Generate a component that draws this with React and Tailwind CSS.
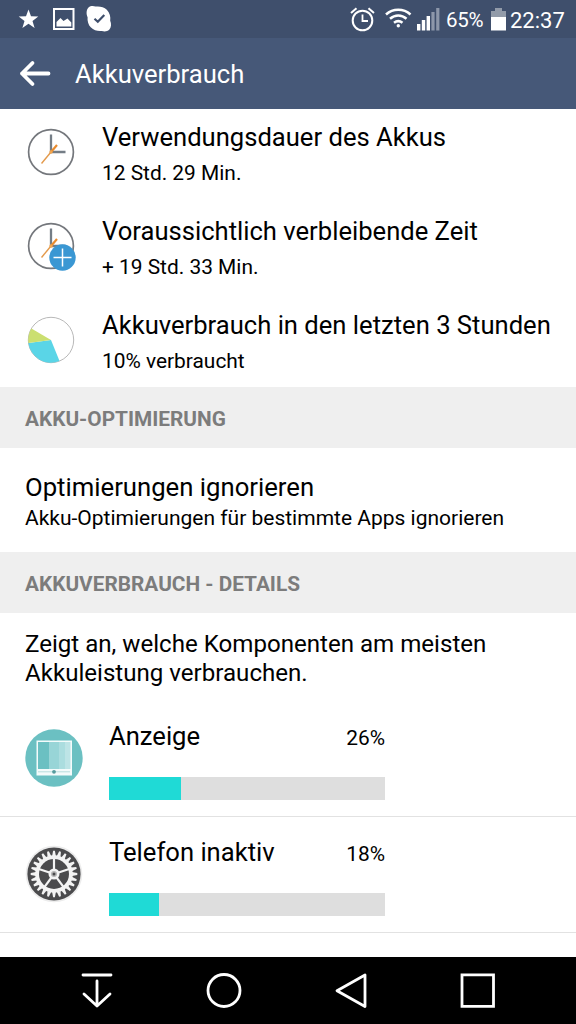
import React from 'react';

const overview = [
  { icon: 'clock', title: 'Verwendungsdauer des Akkus', text: '12 Std. 29 Min.' },
  { icon: 'clockPlus', title: 'Voraussichtlich verbleibende Zeit', text: '+ 19 Std. 33 Min.' },
  { icon: 'pie', title: 'Akkuverbrauch in den letzten 3 Stunden', text: '10% verbraucht' },
];

const details = [
  { icon: 'display', name: 'Anzeige', percent: 26 },
  { icon: 'gear', name: 'Telefon inaktiv', percent: 18 },
];

const teeth = Array.from({ length: 24 }, (_, i) => i * 15);
const spokes = [0, 72, 144, 216, 288];

const ClockIcon = ({ plus }) => (
  <svg width="52" height="52" viewBox="0 0 52 52" fill="none">
    <circle cx="26" cy="26" r="22.4" stroke="#74777c" strokeWidth="1.7" />
    <path d="M26 8.500v17.500h14.500" stroke="#747d86" strokeWidth="2.300" />
    <path d="M26 26l-9.500 11.500" stroke="#e39a4c" strokeWidth="1.400" />
    <path d="M26 26l6-7" stroke="#e88b2e" strokeWidth="2.200" />
    <circle cx="26" cy="26" r="1.700" fill="#f3a64f" />
    {plus && (
      <>
        <circle cx="37.500" cy="37.500" r="13.200" fill="#3a97d3" />
        <path d="M37.500 28.500v18M28.500 37.500h18" stroke="#fff" strokeWidth="1.500" />
      </>
    )}
  </svg>
);

const PieIcon = () => (
  <svg width="52" height="52" viewBox="0 0 52 52">
    <circle cx="26" cy="26" r="22.700" fill="#fff" stroke="#999" strokeWidth="0.700" />
    <path d="M26 26L3.400 29A22.700 22.700 0 0 0 34.500 47z" fill="#5ad5e7" />
    <path d="M26 26L3.400 29A22.700 22.700 0 0 1 6.400 14.600z" fill="#cbdf70" />
  </svg>
);

const DisplayIcon = () => (
  <svg width="58" height="58" viewBox="0 0 58 58">
    <circle cx="29" cy="29" r="28.700" fill="#6bc0c2" />
    <path d="M11.500 11.500h35.500v35h-35.500z" fill="#f4fbfb" />
    <path d="M13 13h11v27H13z" fill="#6bc0c2" />
    <path d="M24 13h10v27H24z" fill="#98d5d7" />
    <path d="M34 13h6v27h-6z" fill="#abdddf" />
    <path d="M40 13h5.500v27h-5.500z" fill="#bde4e6" />
    <path d="M13 42.800h32" stroke="#a9d6d6" strokeWidth="0.800" />
    <circle cx="29" cy="42.800" r="1.900" fill="#559c9e" />
  </svg>
);

const GearIcon = () => (
  <svg width="58" height="58" viewBox="-29 -29 58 58">
    <circle r="28.300" fill="#ececec" />
    <circle r="26.600" fill="#4b4b4d" />
    <circle r="18.800" fill="#f4f4f4" />
    {teeth.map((angle) => (
      <path key={angle} d="M-1.900-18L-.900-23.300H.900L1.900-18z" fill="#f4f4f4" transform={`rotate(${angle})`} />
    ))}
    <circle r="15" fill="#4b4b4d" />
    {spokes.map((angle) => (
      <path key={angle} d="M0 0V16" stroke="#f4f4f4" strokeWidth="2.200" transform={`rotate(${angle + 36})`} />
    ))}
    <circle r="5.500" fill="#f4f4f4" />
    <circle r="3" fill="#b5b5b5" />
    <circle r="1.500" fill="#4b4b4d" />
  </svg>
);

const icons = {
  clock: <ClockIcon />,
  clockPlus: <ClockIcon plus />,
  pie: <PieIcon />,
  display: <DisplayIcon />,
  gear: <GearIcon />,
};

const StatusBar = () => (
  <div className="flex h-[38px] shrink-0 items-center justify-between bg-[#3f4f6c] pl-[18px] pr-[11px] text-white">
    <div className="flex items-center">
      <svg width="100" height="38" viewBox="0 0 100 38">
        <path d="M10.500 9.500l2.500 6.800 7.300.200-5.800 4.400 2.100 7-6.100-4.100-6.100 4.100 2.100-7L.700 16.500l7.300-.200z" fill="#fff" />
        <path d="M36 9h19.500v20H36z" fill="none" stroke="#fff" strokeWidth="2" />
        <path d="M38.500 26.500v-4.500l4-4 3 3 4-2.500 3.800 4v4z" fill="#fff" />
        <path d="M70.500 7.500c2-1.600 4.700-1.700 7-.9 4-.5 8.500.3 11.300 3.200 3 3 4 7 3.400 11 1.300 3 1.200 6.800-1 9-2 1.900-5 2-7.400 1.200-4 .4-8-.5-10.800-3.400-2.700-2.800-3.800-6.600-3.400-10.400-1.500-3-1.400-7.500.9-9.700z" fill="#fff" />
        <path d="M76.500 18.800l3.300 3 6.500-6.800" fill="none" stroke="#3f4f6c" strokeWidth="2.200" />
      </svg>
    </div>
    <div className="flex items-center">
      <svg width="96" height="38" viewBox="0 0 96 38" fill="none" stroke="#fff">
        <circle cx="17.500" cy="20.500" r="9.800" strokeWidth="2" />
        <path d="M17.500 14.500v6.500h5.500" strokeWidth="1.800" />
        <path d="M6 13l5.500-4.800M29 13l-5.500-4.800" strokeWidth="2" />
        <path d="M41 14.500c7-6.300 17.500-6.300 24.500 0M45 18.800c5-4.300 11.500-4.300 16.500 0M49 22.800c2.700-2.100 5.800-2.100 8.500 0" strokeWidth="2.500" />
        <circle cx="53.300" cy="25.800" r="1.700" fill="#fff" stroke="none" />
        <path d="M72 24h3.400v6.500H72zM76.800 20h3.400v10.500h-3.400zM81.600 16h3.400v14.500h-3.400z" fill="#fff" stroke="none" />
        <path d="M86.400 12h3.200v18.500h-3.200zM91.200 8h3.200v22.500h-3.200z" fill="#8d97aa" stroke="none" />
      </svg>
      <span className="ml-[5px] w-[38px] whitespace-nowrap pt-[2px] text-[20.500px] tracking-[-0.3px]">65%</span>
      <svg className="ml-[7px]" width="15" height="38" viewBox="0 0 15 38">
        <path d="M0 11h4V8h7v3h4v7H0z" fill="#929ba9" />
        <path d="M0 17h15v13.500H0z" fill="#fff" />
      </svg>
      <span className="ml-[4px] w-[55px] whitespace-nowrap pt-[2px] text-[22px]">22:37</span>
    </div>
  </div>
);

const SectionTitle = ({ children }) => (
  <h2 className="flex h-[61px] shrink-0 items-center bg-[#efefef] px-[25px] pt-[4px] text-[20.800px] font-bold text-[#7c7c7c]">
    {children}
  </h2>
);

const NavBar = () => (
  <nav className="flex h-[67px] shrink-0 items-center justify-between bg-black pl-[78px] pr-[79px]">
    <svg width="38" height="38" viewBox="0 0 38 38" fill="none" stroke="#fff" strokeWidth="2.800" strokeLinecap="round" strokeLinejoin="round">
      <path d="M5 3h28M19 9v25M6 22l13 12 13-12" />
    </svg>
    <svg width="38" height="38" viewBox="0 0 38 38" fill="none" stroke="#fff" strokeWidth="2.800">
      <circle cx="19" cy="18.500" r="16" />
    </svg>
    <svg width="38" height="38" viewBox="0 0 38 38" fill="none" stroke="#fff" strokeWidth="2.800" strokeLinejoin="round">
      <path d="M33 3v31.500L5 18.700z" />
    </svg>
    <svg width="38" height="38" viewBox="0 0 38 38" fill="none" stroke="#fff" strokeWidth="2.800">
      <path d="M3 2.800h31.500v31.500H3z" />
    </svg>
  </nav>
);

const App = () => {
  return (
    <div className="flex h-[1024px] w-[576px] flex-col overflow-hidden bg-white font-[Roboto,sans-serif] text-black">
      <StatusBar />
      <header className="flex h-[71px] shrink-0 items-center bg-[#465878] pl-[19px] text-white">
        <svg width="32" height="30" viewBox="0 0 32 30" fill="none" stroke="#fff" strokeWidth="3.800" strokeLinecap="round" strokeLinejoin="round">
          <path d="M29.500 14.500H3M13.500 4L3 14.500 13.500 25" />
        </svg>
        <h1 className="ml-[24px] pt-[2px] text-[25.600px]">Akkuverbrauch</h1>
      </header>

      <main className="flex h-[848px] shrink-0 flex-col">
        <section className="h-[278px]">
          {overview.map((row) => (
            <div key={row.title} className="flex h-[94px] pl-[25px]">
              <div className="w-[77px] pt-[17px]">{icons[row.icon]}</div>
              <div className="whitespace-nowrap pt-[12px]">
                <p className="text-[25.600px] leading-[32px]">{row.title}</p>
                <p className="mt-[6px] text-[20.900px] leading-[28px]">{row.text}</p>
              </div>
            </div>
          ))}
        </section>

        <SectionTitle>AKKU-OPTIMIERUNG</SectionTitle>
        <section className="h-[104px] shrink-0 whitespace-nowrap px-[25px] pt-[23px]">
          <p className="text-[25.700px] leading-[32px]">Optimierungen ignorieren</p>
          <p className="mt-px text-[21px] leading-[29px]">Akku-Optimierungen für bestimmte Apps ignorieren</p>
        </section>

        <SectionTitle>AKKUVERBRAUCH - DETAILS</SectionTitle>
        <p className="h-[88px] shrink-0 px-[25px] pt-[17px] text-[24.100px] leading-[29px]">
          Zeigt an, welche Komponenten am meisten
          <br />
          Akkuleistung verbrauchen.
        </p>

        {details.map((item) => (
          <div key={item.name} className="flex h-[116px] shrink-0 border-b border-[#e2e2e2] pl-[25px]">
            <div className="w-[84px] pt-[28px]">{icons[item.icon]}</div>
            <div className="w-[276px] pt-[19px]">
              <div className="flex h-[32px] items-center justify-between">
                <span className="text-[25.600px]">{item.name}</span>
                <span className="pt-[5px] text-[20.900px]">{item.percent}%</span>
              </div>
              <div className="mt-[25px] h-[23px] bg-[#dedede]">
                <div className="h-full bg-[#1fdad6]" style={{ width: `${item.percent}%` }} />
              </div>
            </div>
          </div>
        ))}
      </main>
      <NavBar />
    </div>
  );
};

export default App;
